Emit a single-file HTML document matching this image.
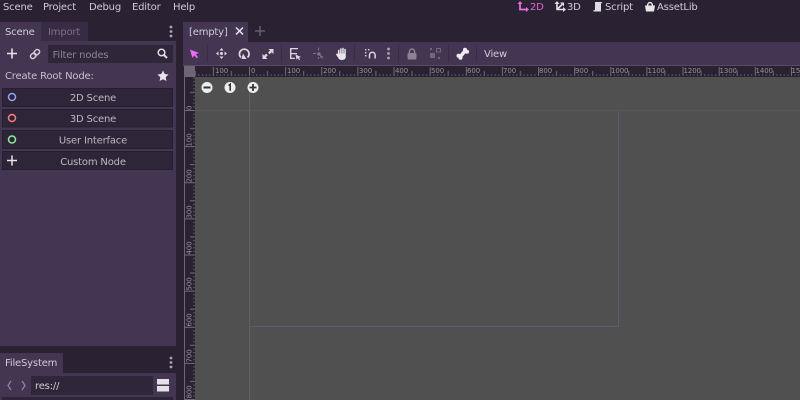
<!DOCTYPE html>
<html><head><meta charset="utf-8"><style>
html,body{margin:0;padding:0;background:#2a2232;width:800px;height:400px;overflow:hidden}
svg{display:block}
text{font-family:"DejaVu Sans","Liberation Sans",sans-serif;font-size:10px;fill:#cfcbd3;letter-spacing:-.18px}
.c{text-anchor:middle}
.d{fill:#7a7283}
.r{font-size:7px;fill:#96909e;letter-spacing:-.1px}
</style></head><body>
<svg width="800" height="400" viewBox="0 0 800 400" xmlns="http://www.w3.org/2000/svg">
<defs>
<pattern id="hm" x="249" y="0" width="36.13" height="400" patternUnits="userSpaceOnUse">
<rect x="0" y="67" width="1" height="9" fill="#746c7d"/>
<rect x="18" y="71" width="1" height="5" fill="#746c7d"/>
<g fill="#5a5264"><rect x="3.6" y="74" width="1" height="2"/><rect x="7.2" y="74" width="1" height="2"/><rect x="10.8" y="74" width="1" height="2"/><rect x="14.4" y="74" width="1" height="2"/><rect x="21.7" y="74" width="1" height="2"/><rect x="25.3" y="74" width="1" height="2"/><rect x="28.9" y="74" width="1" height="2"/><rect x="32.5" y="74" width="1" height="2"/></g>
</pattern>
<pattern id="vm" x="0" y="110" width="400" height="36.13" patternUnits="userSpaceOnUse">
<rect x="185" y="0" width="10" height="1" fill="#746c7d"/>
<rect x="190" y="18" width="5" height="1" fill="#746c7d"/>
<g fill="#5a5264"><rect x="193" y="3.6" width="2" height="1"/><rect x="193" y="7.2" width="2" height="1"/><rect x="193" y="10.8" width="2" height="1"/><rect x="193" y="14.4" width="2" height="1"/><rect x="193" y="21.7" width="2" height="1"/><rect x="193" y="25.3" width="2" height="1"/><rect x="193" y="28.9" width="2" height="1"/><rect x="193" y="32.5" width="2" height="1"/></g>
</pattern>
</defs>

<rect width="800" height="400" fill="#2a2232"/>

<!-- left dock -->
<rect x="0" y="22" width="41" height="20" fill="#443652"/>
<rect x="41" y="22" width="47" height="20" fill="#372c43"/>
<rect x="0" y="41" width="176" height="305" fill="#443652"/>
<text x="5" y="35">Scene</text>
<text x="48" y="35" class="d">Import</text>
<g fill="#a9a3ae"><circle cx="171" cy="27" r="1.4"/><circle cx="171" cy="31.500" r="1.4"/><circle cx="171" cy="36" r="1.4"/></g>

<path d="M12 48.500v10M7 53.500h10" stroke="#e6e4e8" stroke-width="1.600" fill="none"/>
<g transform="rotate(-45 35 54)" fill="none" stroke="#cfcbd3" stroke-width="1.500"><rect x="29.500" y="51.800" width="6" height="4.500" rx="2.200"/><rect x="34.500" y="51.800" width="6" height="4.500" rx="2.200"/></g>
<rect x="48" y="45" width="125" height="18" fill="#2f2639"/>
<text x="52.500" y="58" class="d" style="fill:#8b8493">Filter nodes</text>
<circle cx="161.500" cy="52.500" r="3.300" fill="none" stroke="#e0dde3" stroke-width="1.500"/>
<path d="M164 55l3 3" stroke="#e0dde3" stroke-width="2"/>

<text x="5" y="79" style="fill:#c5c0ca">Create Root Node:</text>
<path d="M163 70.500l1.700 3.500 3.800.5-2.800 2.700.7 3.800-3.400-1.800-3.400 1.800.7-3.800-2.800-2.700 3.800-.5z" fill="#e8e6ea"/>

<g fill="#2e2538" stroke="#271f30" stroke-width="1">
<rect x="2.500" y="88.500" width="170" height="18"/>
<rect x="2.500" y="109.500" width="170" height="17.500"/>
<rect x="2.500" y="130.500" width="170" height="18"/>
<rect x="2.500" y="151.500" width="170" height="18"/>
</g>
<circle cx="12" cy="97" r="3.500" fill="none" stroke="#8da5f3" stroke-width="1.500"/>
<circle cx="12" cy="118" r="3.500" fill="none" stroke="#fc7f7f" stroke-width="1.500"/>
<circle cx="12" cy="139.500" r="3.500" fill="none" stroke="#8eef97" stroke-width="1.500"/>
<path d="M12 155.500v10M7 160.500h10" stroke="#e6e4e8" stroke-width="1.500" fill="none"/>
<text x="93" y="101" class="c" style="fill:#bdb8c2">2D Scene</text>
<text x="93" y="122" class="c" style="fill:#bdb8c2">3D Scene</text>
<text x="93" y="143.500" class="c" style="fill:#bdb8c2">User Interface</text>
<text x="93" y="165" class="c" style="fill:#bdb8c2">Custom Node</text>

<!-- filesystem dock -->
<rect x="0" y="353" width="63" height="21" fill="#443652"/>
<rect x="0" y="373" width="176" height="27" fill="#443652"/>
<text x="5" y="366">FileSystem</text>
<g fill="#a9a3ae"><circle cx="171" cy="358" r="1.400"/><circle cx="171" cy="362.500" r="1.400"/><circle cx="171" cy="367" r="1.400"/></g>
<path d="M11 381l-3 4.500 3 4.500M22 381l3 4.500-3 4.500" fill="none" stroke="#8d8696" stroke-width="1.300"/>
<rect x="31" y="376" width="122" height="19" fill="#2f2639"/>
<text x="35" y="389">res://</text>
<rect x="157" y="379" width="12" height="5.500" fill="#e4e2e7"/>
<rect x="157" y="386" width="12" height="5.500" fill="#e4e2e7"/>
<rect x="2" y="397" width="171" height="3" fill="#2e2538"/>

<!-- menu -->
<text x="3" y="10">Scene</text>
<text x="43" y="10">Project</text>
<text x="89" y="10">Debug</text>
<text x="132" y="10">Editor</text>
<text x="173" y="10">Help</text>

<path d="M520 2.500v7h7" fill="none" stroke="#e36fdc" stroke-width="1.800"/>
<path d="M517.500 4l2.500-3 2.500 3zM526 7l3 2.500-3 2.500z" fill="#e36fdc"/>
<text x="530" y="10" style="fill:#de66d8">2D</text>
<path d="M557 2.500v7h7M557 9.500l5-5" fill="none" stroke="#e2e0e5" stroke-width="1.600"/>
<path d="M554.500 4l2.500-3 2.500 3zM563 7l3 2.500-3 2.500zM560 2.500h4v4z" fill="#e2e0e5"/>
<text x="567" y="10" style="fill:#cfcbd3">3D</text>
<path d="M595 2h7.500l-1.500 1.500v8h-7.500v-1.500h1.500z" fill="#dedbe1"/>
<text x="605" y="10">Script</text>
<path d="M645 5.500h10l-1 6h-8z" fill="#e8e6ea"/>
<path d="M647.500 6a2.500 3.500 0 0 1 5 0" fill="none" stroke="#e8e6ea" stroke-width="1.400"/>
<text x="657" y="10">AssetLib</text>

<!-- tab bar -->
<rect x="183" y="22" width="65" height="20" fill="#443652"/>
<text x="189" y="35">[empty]</text>
<path d="M236 27.500l7 7M243 27.500l-7 7" stroke="#e6e4e8" stroke-width="1.500"/>
<path d="M260 26v10M255 31h10" stroke="#6f6679" stroke-width="1.300"/>

<!-- toolbar -->
<rect x="183" y="42" width="617" height="23" fill="#443652"/>
<rect x="183" y="65" width="617" height="1" fill="#574a65"/>
<path d="M190 49.500l9 3.500-3.300 1.300 2.500 3-1.500 1-2.300-2.900-2 2.500z" fill="#ec6bf0"/>
<g stroke="#382d45" stroke-width="1"><path d="M207.500 45v17M281.500 45v17M354.500 45v17M398.500 45v17M448.500 45v17M476.500 45v17"/></g>
<g fill="#dbd8de">
<path d="M221.500 48l2 2.500h-4zM221.500 59l2-2.500h-4zM216 53.500l2.500-2v4zM227 53.500l-2.500-2v4z"/>
<circle cx="221.500" cy="53.500" r="1.500"/>
</g>
<path d="M241 57.500a4.800 4.800 0 1 1 6.500 0" fill="none" stroke="#dbd8de" stroke-width="1.700"/>
<path d="M243 53.500l3.500 5.500h-5z" fill="#dbd8de"/>
<path d="M268.500 49h5v5l-1.800-1.700-2 2-1.700-1.700 2-2zM262.500 59h5l-1.700-1.700 2-2-1.700-1.700-2 2-1.600-1.800z" fill="#dbd8de"/>
<path d="M290 48h8v1.300h-8zM290 48h1.400v11h-1.400zM290 53h7v1.300h-7zM290 57.700h5v1.300h-5z" fill="#dbd8de"/>
<path d="M295.500 54.500l5.500 2.500-2 .8 1 2-1 .5-1-2-1.500 1.200z" fill="#dbd8de"/>
<g fill="#7c7386"><rect x="318" y="47.500" width="1" height="3"/><rect x="318" y="57" width="1" height="2"/><rect x="313" y="53" width="3" height="1"/><circle cx="319" cy="54" r="1.800"/><path d="M320 55l3.500 1.500-1.300.5.7 1.500-.8.400-.7-1.500-1 .8z"/></g>
<path d="M338 50.500c0-1 1.500-1 1.500 0v3h.6v-4.500c0-1 1.500-1 1.500 0v4.500h.6v-5c0-1 1.500-1 1.500 0v5h.6v-4c0-1 1.500-1 1.500 0v7c0 2.500-1.500 3.500-4 3.500-2 0-3-1-3.500-2l-2-3c-.6-1 .6-1.800 1.400-1z" fill="#e8e6ea"/>
<g fill="#dbd8de"><rect x="365" y="49" width="1.400" height="1.400"/><rect x="368" y="49" width="1.400" height="1.400"/><rect x="365" y="52" width="1.400" height="1.400"/><rect x="365" y="55" width="1.400" height="1.400"/></g>
<path d="M369.500 58.500v-3.500a2.800 2.800 0 0 1 5.600 0v3.500" fill="none" stroke="#dbd8de" stroke-width="1.500"/>
<g fill="#a9a3ae"><circle cx="388.500" cy="49" r="1.400"/><circle cx="388.500" cy="53.500" r="1.400"/><circle cx="388.500" cy="58" r="1.400"/></g>
<rect x="407.500" y="53" width="9" height="6.500" rx="1" fill="#8a8193"/>
<path d="M409.500 53v-1.500a2.500 2.500 0 0 1 5 0V53" fill="none" stroke="#8a8193" stroke-width="1.500"/>
<g fill="#70677a"><rect x="430" y="53" width="5" height="5"/><rect x="436.500" y="48.500" width="4" height="3.500" fill="none" stroke="#70677a"/><rect x="430" y="48" width="2" height="2"/><rect x="438" y="57" width="2" height="2"/></g>
<path d="M460 57l5-6" stroke="#eeecef" stroke-width="3.600"/>
<circle cx="465" cy="49.800" r="2" fill="#eeecef"/><circle cx="467" cy="51.800" r="2" fill="#eeecef"/>
<circle cx="458.500" cy="55.800" r="2" fill="#eeecef"/><circle cx="460.500" cy="57.800" r="2" fill="#eeecef"/>
<text x="484" y="57" style="fill:#cfcbd3">View</text>

<!-- rulers -->
<rect x="184" y="66" width="616" height="11" fill="#2a2232"/>
<rect x="184" y="66" width="11" height="334" fill="#2a2232"/>
<rect x="184" y="66" width="1" height="334" fill="#6f6679"/>
<rect x="184" y="66" width="11" height="11" fill="#6e6676"/>

<rect x="195" y="66" width="605" height="11" fill="url(#hm)"/>
<rect x="185" y="77" width="10" height="323" fill="url(#vm)"/>
<g class="t">
<text class="r" x="215" y="73">100</text><text class="r" x="251" y="73">0</text><text class="r" x="287" y="73">100</text><text class="r" x="323" y="73">200</text><text class="r" x="359" y="73">300</text><text class="r" x="395" y="73">400</text><text class="r" x="431" y="73">500</text><text class="r" x="467" y="73">600</text><text class="r" x="503" y="73">700</text><text class="r" x="539" y="73">800</text><text class="r" x="575" y="73">900</text><text class="r" x="611" y="73">1000</text><text class="r" x="647.500" y="73">1100</text><text class="r" x="683.500" y="73">1200</text><text class="r" x="719.500" y="73">1300</text><text class="r" x="755.500" y="73">1400</text><text class="r" x="791.500" y="73">1500</text>
</g>
<g>
<text class="r" transform="translate(191.500 110) rotate(-90)">0</text>
<text class="r" transform="translate(191.500 146.500) rotate(-90)">100</text>
<text class="r" transform="translate(191.500 182.500) rotate(-90)">200</text>
<text class="r" transform="translate(191.500 218.500) rotate(-90)">300</text>
<text class="r" transform="translate(191.500 254.500) rotate(-90)">400</text>
<text class="r" transform="translate(191.500 290.500) rotate(-90)">500</text>
<text class="r" transform="translate(191.500 326.500) rotate(-90)">600</text>
<text class="r" transform="translate(191.500 362.500) rotate(-90)">700</text>
<text class="r" transform="translate(191.500 398.500) rotate(-90)">800</text>
</g>

<!-- canvas -->
<rect x="195" y="77" width="605" height="323" fill="#505050"/>
<rect x="195" y="110" width="605" height="1" fill="#66505a"/>
<rect x="249" y="77" width="1" height="323" fill="#566a5c"/>
<rect x="249" y="326" width="369" height="1" fill="#5f5a72"/>
<rect x="618" y="111" width="1" height="216" fill="#5f5a72"/>

<!-- zoom buttons -->
<circle cx="207" cy="87.500" r="5.500" fill="#eeeeee"/><rect x="203.500" y="86.500" width="7" height="2" fill="#333"/>
<circle cx="230" cy="87.500" r="5.500" fill="#eeeeee"/><path d="M228.500 85.500l1.700-1.200v6.500" fill="none" stroke="#333" stroke-width="1.600"/>
<circle cx="253" cy="87.500" r="5.500" fill="#eeeeee"/><path d="M249.500 87.500h7M253 84v7" stroke="#333" stroke-width="1.800"/>
</svg>
</body></html>
